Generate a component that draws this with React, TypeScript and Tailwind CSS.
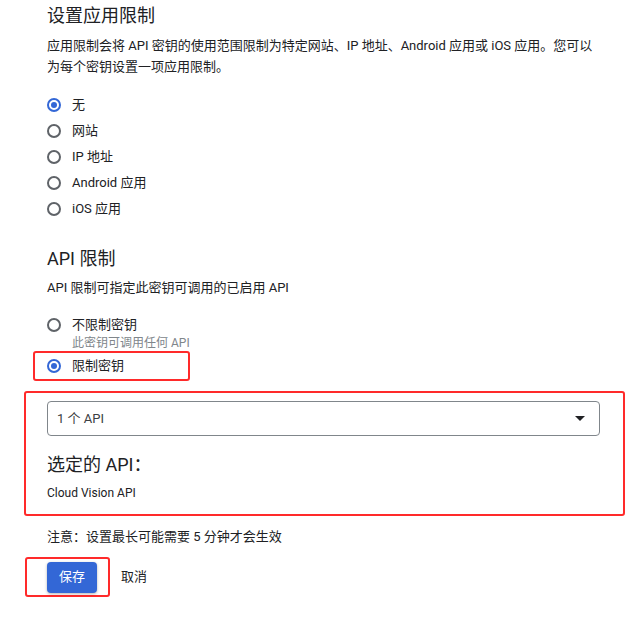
import { useState } from 'react'

type Option = { value: string; label: string; hint?: string }

const appOptions: Option[] = [
  { value: 'none', label: '无' },
  { value: 'web', label: '网站' },
  { value: 'ip', label: 'IP 地址' },
  { value: 'android', label: 'Android 应用' },
  { value: 'ios', label: 'iOS 应用' },
]

function Radio({ checked }: { checked: boolean }) {
  return (
    <span
      className={
        checked
          ? 'flex h-[14px] w-[14px] shrink-0 items-center justify-center rounded-full border-2 border-[#3367d6]'
          : 'flex h-[14px] w-[14px] shrink-0 items-center justify-center rounded-full border-2 border-[#5f6368]'
      }
    >
      {checked && <span className="h-[6px] w-[6px] rounded-full bg-[#3367d6]" />}
    </span>
  )
}

function RadioRow({ label, checked, onClick }: { label: string; checked: boolean; onClick: () => void }) {
  return (
    <label className="flex h-[26px] cursor-pointer items-center gap-[11px]" onClick={onClick}>
      <Radio checked={checked} />
      <span className="text-[13px] leading-[20px] text-[#202124]">{label}</span>
    </label>
  )
}

export default function App() {
  const [appLimit, setAppLimit] = useState('none')
  const [apiLimit, setApiLimit] = useState('restrict')

  return (
    <div className="h-[632px] w-[632px] overflow-hidden bg-white pl-[47px] font-['Roboto','Noto_Sans_CJK_SC',sans-serif] text-[#202124]">
      <h2 className="mt-[4px] text-[18px] leading-[24px] font-normal">设置应用限制</h2>
      <p className="mt-[7px] w-[580px] text-[13px] leading-[21px]">
        应用限制会将 API 密钥的使用范围限制为特定网站、IP 地址、Android 应用或 iOS 应用。您可以
        <br />
        为每个密钥设置一项应用限制。
      </p>

      <div className="mt-[15px] flex flex-col">
        {appOptions.map(o => (
          <RadioRow key={o.value} label={o.label} checked={appLimit === o.value} onClick={() => setAppLimit(o.value)} />
        ))}
      </div>

      <h2 className="mt-[25px] text-[18px] leading-[24px] font-normal">API 限制</h2>
      <p className="mt-[6px] text-[13px] leading-[21px]">API 限制可指定此密钥可调用的已启用 API</p>

      <div className="mt-[16px] flex h-[22px] cursor-pointer items-center gap-[11px]" onClick={() => setApiLimit('none')}>
        <Radio checked={apiLimit === 'none'} />
        <span className="text-[13px] leading-[20px]">不限制密钥</span>
      </div>
      <p className="pl-[25px] text-[12px] leading-[14px] text-[#80868b]">此密钥可调用任何 API</p>

      <div className="mt-[1px] ml-[-14px] flex h-[30px] w-[157px] items-center gap-[11px] rounded-[3px] border-2 border-[#ff2a2a] pl-[12px]" onClick={() => setApiLimit('restrict')}>
        <Radio checked={apiLimit === 'restrict'} />
        <span className="text-[13px] leading-[20px]">限制密钥</span>
      </div>

      <div className="mt-[10px] ml-[-23px] w-[601px] rounded-[3px] border-2 border-[#ff2a2a] pt-[8px] pr-[23px] pb-[13px] pl-[21px]">
        <div className="flex h-[35px] items-center justify-between rounded-[4px] border border-[#80868b] pr-[14px] pl-[9px]">
          <span className="text-[13px] text-[#3c4043]">1 个 API</span>
          <svg width="10" height="5" viewBox="0 0 10 5">
            <path d="M0 0h10L5 5z" fill="#202124" />
          </svg>
        </div>
        <h3 className="mt-[17px] text-[18px] leading-[24px] font-normal">选定的 API：</h3>
        <p className="mt-[8px] text-[12px] leading-[16px]">Cloud Vision API</p>
      </div>

      <p className="mt-[11px] text-[13px] leading-[20px]">注意：设置最长可能需要 5 分钟才会生效</p>

      <div className="mt-[10px] flex items-center gap-[11px]">
        <div className="ml-[-22px] flex h-[40px] w-[85px] items-center rounded-[3px] border-2 border-[#ff2a2a] pl-[20px]">
          <button className="h-[31px] w-[50px] rounded-[4px] bg-[#3367d6] text-[13px] text-white shadow-[0_1px_3px_rgba(0,0,0,0.3)]">
            保存
          </button>
        </div>
        <button className="text-[13px] text-[#202124]">取消</button>
      </div>
    </div>
  )
}
